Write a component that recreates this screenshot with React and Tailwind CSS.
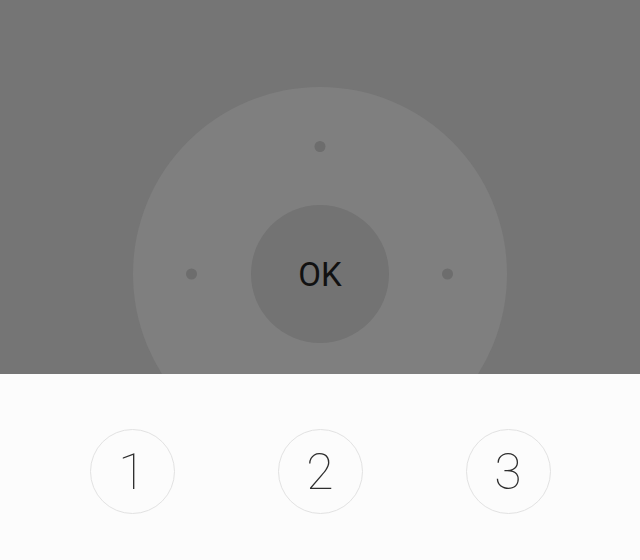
import React from "react";

const KEYS = ["1", "2", "3"];

const App = () => {
  return (
    <div className="w-[640px] h-[560px] bg-[#fcfcfc] overflow-hidden" style={{ fontFamily: "Roboto, 'Liberation Sans', sans-serif" }}>
      {/* D-pad area */}
      <div className="h-[374px] bg-[#757575] overflow-hidden flex justify-center">
        <div className="relative mt-[87px] w-[374px] h-[374px] shrink-0 rounded-full bg-[#7f7f7f] flex items-center justify-center">
          <span className="absolute top-[54px] left-1/2 -translate-x-1/2 w-[11px] h-[11px] rounded-full bg-[#6d6d6d]"></span>
          <span className="absolute left-[53px] top-1/2 -translate-y-1/2 w-[11px] h-[11px] rounded-full bg-[#6d6d6d]"></span>
          <span className="absolute right-[54px] top-1/2 -translate-y-1/2 w-[11px] h-[11px] rounded-full bg-[#6d6d6d]"></span>
          <div className="w-[138px] h-[138px] rounded-full bg-[#737373] flex items-center justify-center">
            <span className="text-[33px] leading-none text-[#111] pt-[1px]">OK</span>
          </div>
        </div>
      </div>

      {/* Number keys */}
      <div className="flex justify-center gap-[103px] pt-[55px]">
        {KEYS.map((k) => (
          <div key={k} className="w-[85px] h-[85px] rounded-full border border-[#e2e2e2] flex items-center justify-center">
            <span className="text-[50px] font-thin leading-none text-[#2e2e2e]">{k}</span>
          </div>
        ))}
      </div>
    </div>
  );
};

export default App;
